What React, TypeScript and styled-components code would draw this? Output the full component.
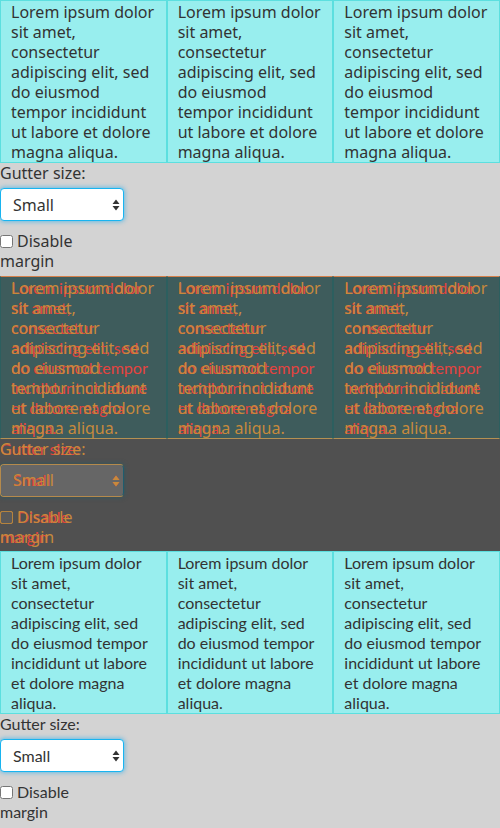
import styled, { createGlobalStyle, css } from "styled-components";

const GlobalStyle = createGlobalStyle`
  body {
    margin: 0;
    background: #d3d3d3;
  }
`;

type Tone = "plain" | "diffBase" | "diffTop";

const LOREM =
  "Lorem ipsum dolor sit amet, consectetur adipiscing elit, sed do eiusmod tempor incididunt ut labore et dolore magna aliqua.";

const FONT_A = `"Noto Sans", "Open Sans", sans-serif`;
const FONT_B = `Lato, "Open Sans", sans-serif`;

const Section = styled.section<{ $tone: Tone; $font: string }>`
  font-family: ${(p) => p.$font};
  font-size: 16px;
  line-height: 20px;
  padding-bottom: 4.5px;
  color: ${(p) =>
    p.$tone === "plain" ? "#333" : p.$tone === "diffBase" ? "#e5433f" : "#c78a3c"};
  background: ${(p) => (p.$tone === "diffBase" ? "#505050" : "transparent")};
`;

const Grid = styled.div`
  display: grid;
  grid-template-columns: repeat(3, 1fr);
`;

const Cell = styled.div<{ $tone: Tone }>`
  padding: 1px 10px 0;
  border: 1px solid;
  ${(p) =>
    p.$tone === "plain"
      ? css`
          background: #98eeee;
          border-color: #5cdfdf;
        `
      : p.$tone === "diffBase"
      ? css`
          background: #3e5c5c;
          border-color: #2c5f5f;
        `
      : css`
          background: transparent;
          border-color: transparent;
          border-top-color: #d5804a;
          border-bottom-color: #b59052;
        `}
`;

const FieldLabel = styled.div`
  height: 20px;
`;

const SelectWrap = styled.div`
  position: relative;
  width: 124px;
  margin: 5px 0 10px;
`;

const Select = styled.select<{ $tone: Tone }>`
  appearance: none;
  display: block;
  width: 124px;
  height: 33px;
  padding: 0 12px;
  border-radius: 4px;
  font: inherit;
  color: inherit;
  outline: none;
  ${(p) =>
    p.$tone === "plain"
      ? css`
          background: #fff;
          border: 1px solid #18b4f0;
          box-shadow: 0 0 4px 1px rgba(20, 170, 240, 0.55);
        `
      : p.$tone === "diffBase"
      ? css`
          background: #666;
          border: 1px solid #1e5d6e;
          box-shadow: 0 0 4px 1px rgba(40, 90, 100, 0.6);
        `
      : css`
          background: transparent;
          border: 1px solid #b58a4c;
          border-right-color: transparent;
        `}
`;

const Arrows = styled.svg`
  position: absolute;
  right: 4px;
  top: 11px;
  width: 8px;
  height: 12px;
  pointer-events: none;
`;

const CheckLabel = styled.label`
  display: block;
  width: 80px;
`;

const Check = styled.input<{ $tone: Tone }>`
  margin: 0 4px 0 0;
  width: 13px;
  height: 13px;
  vertical-align: -1px;
  ${(p) =>
    p.$tone !== "plain" &&
    css`
      appearance: none;
      border: 1px solid #b5833e;
      border-radius: 2px;
      background: ${p.$tone === "diffBase" ? "#5a5a5a" : "transparent"};
    `}
`;

const Stack = styled.div`
  display: grid;
  & > * {
    grid-area: 1 / 1;
  }
`;

function Demo({ tone, font }: { tone: Tone; font: string }) {
  const arrowColor = tone === "plain" ? "#333" : tone === "diffBase" ? "#e5433f" : "#c78a3c";
  return (
    <Section $tone={tone} $font={font}>
      <Grid>
        {[0, 1, 2].map((i) => (
          <Cell key={i} $tone={tone}>
            {LOREM}
          </Cell>
        ))}
      </Grid>
      <FieldLabel>Gutter size:</FieldLabel>
      <SelectWrap>
        <Select $tone={tone} defaultValue="small">
          <option value="small">Small</option>
          <option value="medium">Medium</option>
          <option value="large">Large</option>
        </Select>
        <Arrows viewBox="0 0 8 12">
          <path d="M4 0.5 L7.5 5 H0.5 Z M4 11.5 L7.5 7 H0.5 Z" fill={arrowColor} />
        </Arrows>
      </SelectWrap>
      <CheckLabel>
        <Check type="checkbox" $tone={tone} />
        Disable margin
      </CheckLabel>
    </Section>
  );
}

export default function App() {
  return (
    <>
      <GlobalStyle />
      <Demo tone="plain" font={FONT_A} />
      <Stack>
        <Demo tone="diffBase" font={FONT_B} />
        <Demo tone="diffTop" font={FONT_A} />
      </Stack>
      <Demo tone="plain" font={FONT_B} />
    </>
  );
}
